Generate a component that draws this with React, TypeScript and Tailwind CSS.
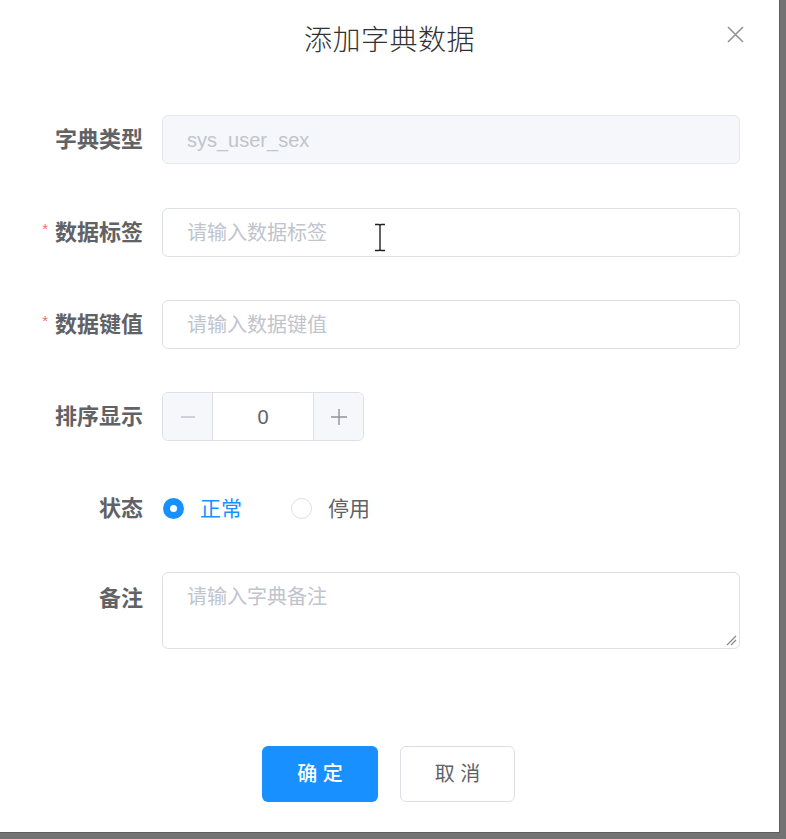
import React from "react";

const font = { fontFamily: '"Liberation Sans", "Noto Sans CJK SC", sans-serif' };

function Label({ text, required }: { text: string; required?: boolean }) {
  return (
    <div className="w-[162px] shrink-0 pr-[19px] flex items-center justify-end text-[22px] font-bold text-[#606266] leading-none">
      {required && <span className="text-[#f56c6c] text-[15px] mr-[7px] font-normal relative -top-[4px]">*</span>}
      <span>{text}</span>
    </div>
  );
}

export default function App() {
  return (
    <div className="w-[786px] h-[839px] bg-[#737373] overflow-hidden" style={font}>
      <div className="w-[780px] h-[833px] bg-white relative flex flex-col border-r border-b border-[#5e5e5e]">
        {/* header */}
        <div className="h-[76px] flex items-center justify-center relative">
          <span className="text-[28px] text-[#303133] leading-none tracking-[0.5px]" style={{ fontFamily: '"Noto Sans CJK SC", sans-serif', fontWeight: 300 }}>
            添加字典数据
          </span>
          <svg className="absolute left-[727px] top-[26px]" width="17" height="17" viewBox="0 0 17 17">
            <path d="M1 1 L16 16 M16 1 L1 16" stroke="#909399" strokeWidth="1.6" fill="none" />
          </svg>
        </div>

        {/* form */}
        <div className="flex flex-col pt-[39px]">
          <div className="flex h-[49px]">
            <Label text="字典类型" />
            <div className="w-[578px] h-[49px] rounded-[6px] border border-[#e4e7ed] bg-[#f5f7fa] flex items-center pl-[24px] text-[20px] text-[#c0c4cc]">
              sys_user_sex
            </div>
          </div>

          <div className="flex h-[49px] mt-[44px]">
            <Label text="数据标签" required />
            <div className="w-[578px] h-[49px] rounded-[6px] border border-[#dcdfe6] bg-white flex items-center pl-[24px] text-[20px] text-[#c0c4cc]">
              请输入数据标签
            </div>
          </div>

          <div className="flex h-[49px] mt-[43px]">
            <Label text="数据键值" required />
            <div className="w-[578px] h-[49px] rounded-[6px] border border-[#dcdfe6] bg-white flex items-center pl-[24px] text-[20px] text-[#c0c4cc]">
              请输入数据键值
            </div>
          </div>

          <div className="flex h-[49px] mt-[43px]">
            <Label text="排序显示" />
            <div className="w-[202px] h-[49px] rounded-[6px] border border-[#dcdfe6] bg-white flex overflow-hidden">
              <div className="w-[50px] h-full bg-[#f5f7fa] border-r border-[#dcdfe6] flex items-center justify-center">
                <svg width="16" height="16" viewBox="0 0 16 16"><path d="M1 8 H15" stroke="#c0c4cc" strokeWidth="1.4" /></svg>
              </div>
              <div className="flex-1 flex items-center justify-center text-[20px] text-[#606266]">0</div>
              <div className="w-[50px] h-full bg-[#f5f7fa] border-l border-[#dcdfe6] flex items-center justify-center">
                <svg width="18" height="18" viewBox="0 0 18 18"><path d="M1 9 H17 M9 1 V17" stroke="#909399" strokeWidth="1.4" /></svg>
              </div>
            </div>
          </div>

          <div className="flex h-[49px] mt-[43px]">
            <Label text="状态" />
            <div className="flex items-center">
              <div className="w-[21px] h-[21px] rounded-full bg-[#1890ff] flex items-center justify-center ml-[1px]">
                <div className="w-[7px] h-[7px] rounded-full bg-white" />
              </div>
              <span className="ml-[16px] text-[21px] text-[#1890ff] leading-none">正常</span>
              <div className="w-[21px] h-[21px] rounded-full border border-[#dcdfe6] bg-white ml-[49px]" />
              <span className="ml-[16px] text-[21px] text-[#606266] leading-none">停用</span>
            </div>
          </div>

          <div className="flex mt-[39px]">
            <div className="w-[162px] shrink-0 pr-[19px] flex justify-end pt-[16px] text-[22px] font-bold text-[#606266] leading-none">
              备注
            </div>
            <div className="w-[578px] h-[77px] rounded-[6px] border border-[#dcdfe6] bg-white pl-[24px] pt-[14px] text-[20px] text-[#c0c4cc] leading-none relative">
              请输入字典备注
              <svg className="absolute right-[2px] bottom-[2px]" width="12" height="12" viewBox="0 0 12 12">
                <path d="M11 2 L2 11 M11 6 L6 11" stroke="#888" strokeWidth="1.2" />
              </svg>
            </div>
          </div>
        </div>

        {/* footer */}
        <div className="flex gap-[22px] pl-[262px] mt-[97px]">
          <div className="w-[116px] h-[56px] rounded-[6px] bg-[#1890ff] flex items-center justify-center text-white text-[20px] font-medium">
            确 定
          </div>
          <div className="w-[115px] h-[56px] rounded-[6px] border border-[#dcdfe6] bg-white flex items-center justify-center text-[#606266] text-[20px]">
            取 消
          </div>
        </div>

        {/* text cursor (I-beam) overlay */}
        <svg className="absolute left-[373px] top-[223px]" width="14" height="29" viewBox="0 0 14 29">
          <path d="M2 1.5 H6 Q7 1.5 7 3 V26 Q7 27.5 6 27.5 H2 M12 1.5 H8 Q7 1.5 7 3 M7 26 Q7 27.5 8 27.5 H12" stroke="#ffffff" strokeWidth="3" fill="none" />
          <path d="M2 1.5 H6 Q7 1.5 7 3 V26 Q7 27.5 6 27.5 H2 M12 1.5 H8 Q7 1.5 7 3 M7 26 Q7 27.5 8 27.5 H12" stroke="#222" strokeWidth="1.4" fill="none" />
        </svg>
      </div>
    </div>
  );
}
